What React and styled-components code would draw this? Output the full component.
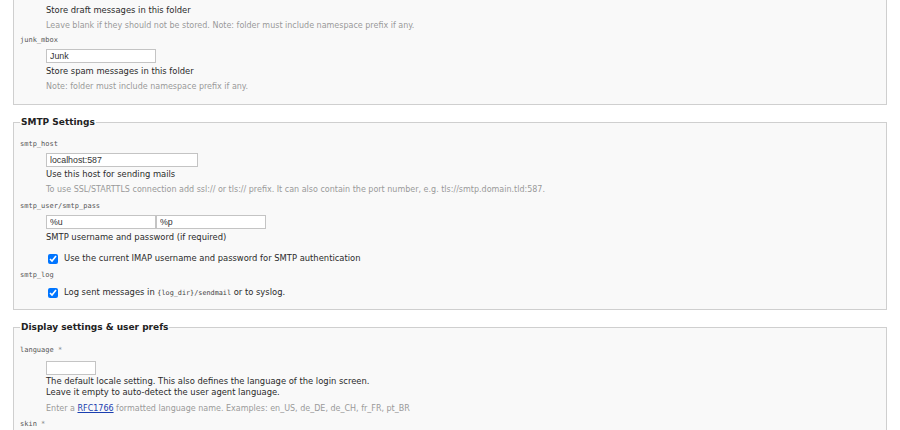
import React from "react";
import styled, { createGlobalStyle } from "styled-components";

const Global = createGlobalStyle`
  html, body { margin: 0; padding: 0; background: #fff; }
  body { font-family: "DejaVu Sans", Verdana, sans-serif; font-size: 8.4px; color: #2a2a2a; }
`;

const Page = styled.div`
  padding: 0 13px;
  display: flex;
  flex-direction: column;
  gap: 11px;
`;

const Fieldset = styled.fieldset`
  margin: 0;
  padding: ${(p) => (p.$clipped ? "5px 6px 12px" : "0 6px 10px")};
  border: 1px solid #cfcfcf;
  border-top: ${(p) => (p.$clipped ? "none" : "1px solid #cfcfcf")};
  background: #f9f9f9;
  min-width: 0;
`;

const Legend = styled.legend`
  font-family: "DejaVu Sans", Verdana, sans-serif;
  font-weight: bold;
  font-size: 9px;
  color: #222;
  padding: 0 1px;
  margin-left: 0;
  line-height: 12px;
`;

const Dl = styled.dl`
  margin: 0;
  padding: 0;
`;

const Dt = styled.dt`
  font-family: "DejaVu Sans Mono", monospace;
  font-size: 7px;
  line-height: 10px;
  color: #555;
  margin-top: ${(p) => p.$top ?? 6}px;
`;

const Star = styled.span`
  color: #8a8a8a;
`;

const Dd = styled.dd`
  margin: ${(p) => p.$top ?? 4}px 0 0 26px;
  display: flex;
  flex-direction: column;
  align-items: flex-start;
`;

const Inputs = styled.div`
  display: flex;
`;

const Input = styled.input`
  box-sizing: border-box;
  width: ${(p) => p.$w}px;
  height: 14px;
  margin: 0;
  padding: 0 3px;
  border: 1px solid #c4c4c4;
  background: #fff;
  font-family: "Liberation Sans", Arial, sans-serif;
  font-size: 8.8px;
  color: #333;
  outline: none;
`;

const Desc = styled.div`
  margin-top: ${(p) => p.$top ?? 2}px;
  line-height: 11px;
  color: #2a2a2a;
`;

const Hint = styled.div`
  margin-top: ${(p) => p.$top ?? 4}px;
  line-height: 11px;
  font-size: 8px;
  color: #9a9a9a;
`;

const CheckRow = styled.label`
  display: flex;
  align-items: center;
  gap: 6px;
  margin-top: ${(p) => p.$top ?? 0}px;
  margin-left: 2px;
  line-height: 11px;
  color: #2a2a2a;
`;

const Check = styled.input`
  width: 10px;
  height: 10px;
  margin: 0;
  accent-color: #0075ff;
`;

const Code = styled.code`
  font-family: "DejaVu Sans Mono", monospace;
  font-size: 6.8px;
  color: #444;
`;

const Link = styled.a`
  color: #1a3fb0;
  text-decoration: underline;
`;

export default function App() {
  return (
    <>
      <Global />
      <Page>
        <Fieldset $clipped>
          <Dl>
            <Dd $top={0}>
              <Desc $top={0}>Store draft messages in this folder</Desc>
              <Hint>Leave blank if they should not be stored. Note: folder must include namespace prefix if any.</Hint>
            </Dd>
            <Dt $top={4}>junk_mbox</Dt>
            <Dd>
              <Input $w={110} defaultValue="Junk" />
              <Desc $top={3}>Store spam messages in this folder</Desc>
              <Hint>Note: folder must include namespace prefix if any.</Hint>
            </Dd>
          </Dl>
        </Fieldset>

        <Fieldset>
          <Legend>SMTP Settings</Legend>
          <Dl>
            <Dt $top={11}>smtp_host</Dt>
            <Dd>
              <Input $w={152} defaultValue="localhost:587" />
              <Desc>Use this host for sending mails</Desc>
              <Hint>To use SSL/STARTTLS connection add ssl:// or tls:// prefix. It can also contain the port number, e.g. tls://smtp.domain.tld:587.</Hint>
            </Dd>
            <Dt $top={6}>smtp_user/smtp_pass</Dt>
            <Dd>
              <Inputs>
                <Input $w={110} defaultValue="%u" />
                <Input $w={110} defaultValue="%p" />
              </Inputs>
              <Desc $top={3}>SMTP username and password (if required)</Desc>
              <CheckRow $top={10}>
                <Check type="checkbox" defaultChecked />
                Use the current IMAP username and password for SMTP authentication
              </CheckRow>
            </Dd>
            <Dt $top={6}>smtp_log</Dt>
            <Dd>
              <CheckRow $top={3}>
                <Check type="checkbox" defaultChecked />
                <span>
                  Log sent messages in <Code>{"{log_dir}"}/sendmail</Code> or to syslog.
                </span>
              </CheckRow>
            </Dd>
          </Dl>
        </Fieldset>

        <Fieldset>
          <Legend>Display settings &amp; user prefs</Legend>
          <Dl>
            <Dt $top={12}>
              language <Star>*</Star>
            </Dt>
            <Dd $top={6}>
              <Input $w={50} defaultValue="" />
              <Desc $top={1}>
                The default locale setting. This also defines the language of the login screen.
                <br />
                Leave it empty to auto-detect the user agent language.
              </Desc>
              <Hint $top={5}>
                Enter a <Link href="#">RFC1766</Link> formatted language name. Examples: en_US, de_DE, de_CH, fr_FR, pt_BR
              </Hint>
            </Dd>
            <Dt $top={5}>
              skin <Star>*</Star>
            </Dt>
            <Dd>
              <Input $w={110} defaultValue="" />
            </Dd>
          </Dl>
        </Fieldset>
      </Page>
    </>
  );
}
